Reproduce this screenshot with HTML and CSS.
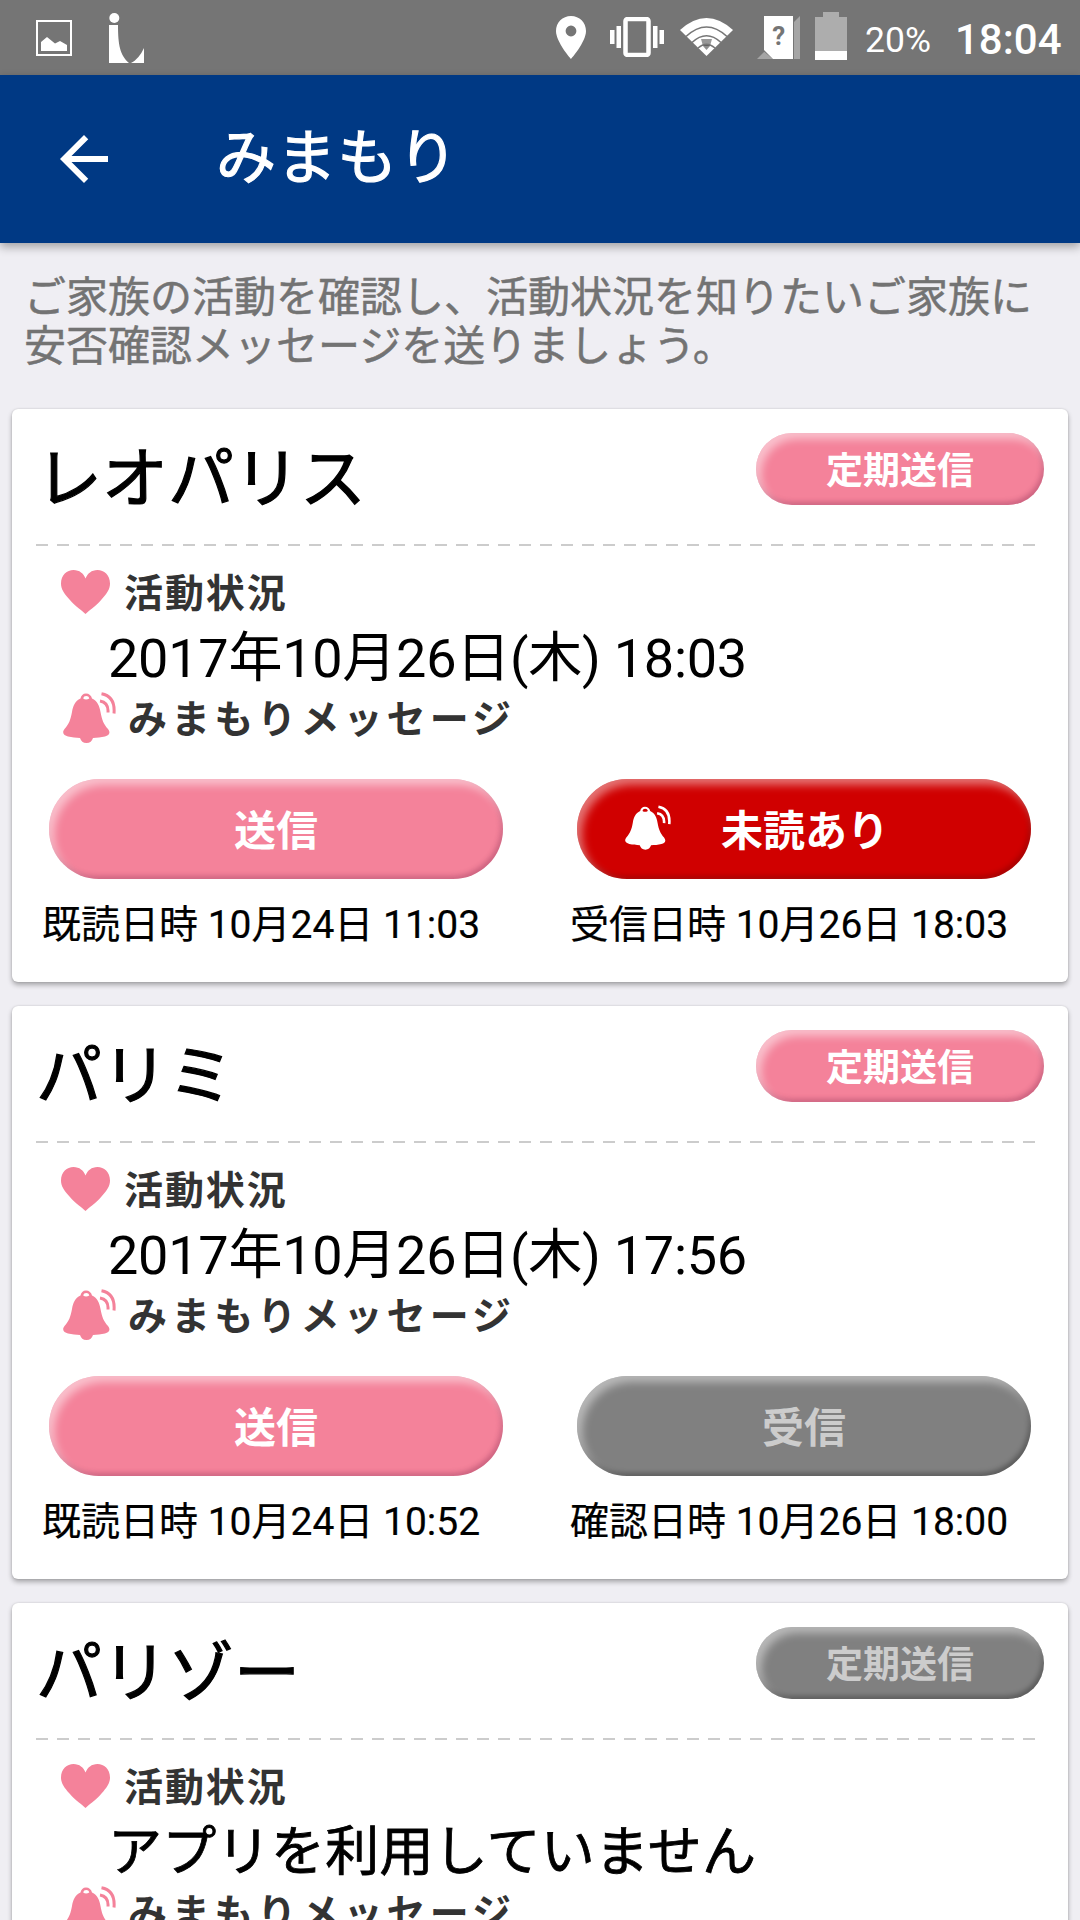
FILE: index.html
```html
<!DOCTYPE html>
<html lang="ja">
<head>
<meta charset="utf-8">
<title>みまもり</title>
<link rel="stylesheet" href="styles.css">
</head>
<body>
<svg class="defs" aria-hidden="true">
  <symbol id="heart" viewBox="0 0 49 44">
    <path d="M24.500 44C21 40.500 15 37 8.500 29.500C3 23.500 0 19 0 13.500C0 5 6 0 12.500 0C18.500 0 22.500 3.500 24.500 8.500C26.500 3.500 30.500 0 36.500 0C43 0 49 5 49 13.500C49 19 46 23.500 40.500 29.500C34 37 28 40.500 24.500 44Z" fill="currentColor"/>
  </symbol>
  <symbol id="bell" viewBox="0 0 53 51">
    <path fill="currentColor" fill-rule="evenodd" d="M23 1.500C20 1.500 18 3.500 17.500 6.500C12 9 10 14 9 20C7.500 28 6 32 1.500 37C-1.500 41 1 43.500 5 44.500C9 45.500 13 45.700 17 46C18 49 20 51 23.500 51C27 51 29 49 30 46C34 45.700 38 45.500 42 44.500C46 43.500 48 41 45 37C40.500 32 39 28 37.500 20C36.500 14 34.500 9 29 6.500C28.500 3.500 26 1.500 23 1.500ZM23.200 4C24.800 4 26 4.800 26.300 6.500C24 7.800 22 7.800 20.200 6.500C20.500 4.800 21.700 4 23.200 4Z"/>
    <path d="M37 9C43 10 45.500 14 45 20.500M38.500 1.700C48 3.500 52 10 51 21.500" fill="none" stroke="currentColor" stroke-width="3"/>
  </symbol>
</svg>

<header class="status-bar">
  <svg class="ic-picture" viewBox="0 0 36 36"><rect x="1" y="1" width="34" height="34" fill="none" stroke="#fff" stroke-width="2"/><path d="M5 31V22L11 17L19 23.500L24 21L31 25V31Z" fill="#fff"/></svg>
  <svg class="ic-logo" viewBox="0 0 35 50"><circle cx="5.300" cy="5" r="5" fill="#fff"/><path d="M0 12H9C9 32 11 42 20 50H0ZM35 35V50H22Q30 46 35 35Z" fill="#fff"/></svg>
  <div class="indicators">
    <svg class="ic-pin" viewBox="0 0 30 43"><path fill="#fff" fill-rule="evenodd" d="M15 0C6.500 0 0 6.500 0 15C0 26 15 43 15 43S30 26 30 15C30 6.500 23.500 0 15 0ZM15 9.600A5.400 5.400 0 1 1 15 20.400A5.400 5.400 0 1 1 15 9.600Z"/></svg>
    <svg class="ic-vibrate" viewBox="0 0 54 40"><rect x="15.500" y="2" width="23" height="36" rx="2" fill="none" stroke="#fff" stroke-width="4.500"/><path d="M0 13h4.500v14H0zM6.500 9H11v22H6.500zM43 9h4.500v22H43zM49.500 13H54v14h-4.500z" fill="#fff"/></svg>
    <svg class="ic-wifi" viewBox="0 0 53 38"><path d="M26.500 38L0 12Q26.500-12 53 12Z" fill="#fff"/><path d="M6 18.500Q26.500-.5 47 18.500M12 24.500Q26.500 11 41 24.500M18 30Q26.500 22.500 35 30" fill="none" stroke="#777" stroke-width="1.600"/><path d="M21 21h11l-2 7h-7z" fill="#777" opacity=".75"/><path d="M23 28q3.500-2 7 0l-3.500 4z" fill="#333" opacity=".55"/></svg>
    <svg class="ic-sim" viewBox="0 0 43 43"><path d="M43 0V43H0Z" fill="#a5a5a5"/><path d="M5 0H37V43H16L5 34Z" fill="#757575"/><path d="M7 0H36V43H16L7 34Z" fill="#fff"/><text x="21.800" y="29" text-anchor="middle" class="sim-mark">?</text></svg>
    <svg class="ic-battery" viewBox="0 0 32 48"><path d="M8 0h16v5h8v34H0V5h8z" fill="#adadad"/><path d="M0 39h32v9H0z" fill="#fff"/></svg>
    <span class="percent">20%</span>
    <span class="clock">18:04</span>
  </div>
</header>

<nav class="app-bar">
  <svg class="back" viewBox="0 0 24 24"><path d="M20 11H7.830l5.590-5.590L12 4l-8 8 8 8 1.410-1.410L7.830 13H20v-2z" fill="#fff"/></svg>
  <h1 class="title">みまもり</h1>
</nav>

<main class="content">
  <p class="intro">ご家族の活動を確認し、活動状況を知りたいご家族に<br>安否確認メッセージを送りましょう。</p>

  <section class="card">
    <div class="card-head"><h2 class="name">レオパリス</h2><button class="pill pill-small pink">定期送信</button></div>
    <svg class="divider"><line x1="0" y1="1" x2="1000" y2="1"/></svg>
    <div class="label"><svg class="heart"><use href="#heart"/></svg><span>活動状況</span></div>
    <p class="activity">2017年10月26日(木) 18:03</p>
    <div class="label message"><svg class="bell"><use href="#bell"/></svg><span>みまもりメッセージ</span></div>
    <div class="actions">
      <div class="action"><button class="pill pink">送信</button><p class="stamp">既読日時 10月24日 11:03</p></div>
      <div class="action"><button class="pill red"><svg class="pill-bell"><use href="#bell"/></svg>未読あり</button><p class="stamp">受信日時 10月26日 18:03</p></div>
    </div>
  </section>

  <section class="card">
    <div class="card-head"><h2 class="name">パリミ</h2><button class="pill pill-small pink">定期送信</button></div>
    <svg class="divider"><line x1="0" y1="1" x2="1000" y2="1"/></svg>
    <div class="label"><svg class="heart"><use href="#heart"/></svg><span>活動状況</span></div>
    <p class="activity">2017年10月26日(木) 17:56</p>
    <div class="label message"><svg class="bell"><use href="#bell"/></svg><span>みまもりメッセージ</span></div>
    <div class="actions">
      <div class="action"><button class="pill pink">送信</button><p class="stamp">既読日時 10月24日 10:52</p></div>
      <div class="action"><button class="pill gray">受信</button><p class="stamp">確認日時 10月26日 18:00</p></div>
    </div>
  </section>

  <section class="card">
    <div class="card-head"><h2 class="name">パリゾー</h2><button class="pill pill-small gray">定期送信</button></div>
    <svg class="divider"><line x1="0" y1="1" x2="1000" y2="1"/></svg>
    <div class="label"><svg class="heart"><use href="#heart"/></svg><span>活動状況</span></div>
    <p class="activity unused">アプリを利用していません</p>
    <div class="label message"><svg class="bell"><use href="#bell"/></svg><span>みまもりメッセージ</span></div>
  </section>
</main>
</body>
</html>
```

FILE: styles.css
```css
* { box-sizing: border-box; margin: 0; padding: 0; }
html, body { height: 1920px; overflow: hidden; }
body {
  width: 1080px;
  display: flex;
  flex-direction: column;
  background: #efeef3;
  color: #000;
  font-family: Roboto, "Noto Sans CJK JP", sans-serif;
  white-space: nowrap;
}
svg { display: block; flex: none; }
.defs { position: absolute; width: 0; height: 0; }

.status-bar {
  flex: none;
  height: 75px;
  padding: 0 18px 0 36px;
  display: flex;
  align-items: flex-start;
  background: #757575;
  color: #fff;
}
.ic-picture { width: 36px; height: 36px; margin-top: 20px; }
.ic-logo { width: 35px; height: 50px; margin: 13px 0 0 37px; }
.indicators { display: flex; align-items: flex-start; margin-left: auto; }
.ic-pin { width: 30px; height: 43px; margin-top: 16px; }
.ic-vibrate { width: 54px; height: 40px; margin: 17px 0 0 24px; }
.ic-wifi { width: 53px; height: 38px; margin: 18px 0 0 16px; }
.ic-sim { width: 43px; height: 43px; margin: 16px 0 0 24px; }
.ic-battery { width: 32px; height: 48px; margin: 12px 0 0 15px; }
.sim-mark { font: 700 26px Roboto, sans-serif; fill: #757575; }
.percent { width: 66px; margin-left: 18px; font-size: 35.500px; line-height: 80px; }
.clock { width: 107px; margin-left: 24px; font-size: 42px; font-weight: 500; line-height: 80px; }

.app-bar {
  position: relative;
  flex: none;
  height: 168px;
  padding: 0 48px;
  display: flex;
  align-items: center;
  gap: 96px;
  background: #003984;
  color: #fff;
  box-shadow: 0 4px 9px rgba(0, 0, 0, .32);
}
.back { width: 72px; height: 72px; }
.title { font-size: 60px; font-weight: 400; line-height: 60px; letter-spacing: .6px; -webkit-text-stroke: 1.200px #fff; }

.content { padding: 30px 12px 0; display: flex; flex-direction: column; gap: 24px; }
.intro {
  height: 112px;
  padding-left: 12px;
  font-size: 42px;
  line-height: 49px;
  color: #737373;
  -webkit-text-stroke: .5px #737373;
}

.card {
  flex: none;
  height: 573px;
  border-radius: 6px;
  background: #fff;
  box-shadow: 0 3px 5px rgba(0, 0, 0, .3), 0 0 2px rgba(0, 0, 0, .15);
}
.card-head {
  height: 135px;
  padding: 24px 24px 0;
  display: flex;
  justify-content: space-between;
  align-items: flex-start;
}
.name { font-size: 66px; font-weight: 400; line-height: 94px; -webkit-text-stroke: 1.200px #000; }
.divider { width: 1000px; height: 2px; margin-left: 24px; }
.divider line { stroke: #ccc; stroke-width: 2; stroke-dasharray: 12 9; }

.label {
  height: 44px;
  margin-top: 26px;
  padding-left: 49px;
  display: flex;
  align-items: center;
  gap: 14px;
  color: #333;
  font-size: 39px;
  font-weight: 700;
  line-height: 48px;
  letter-spacing: 1.900px;
}
.heart { width: 49px; height: 44px; color: #f4829a; margin-top: -4px; }
.activity { height: 82px; padding-left: 96px; font-size: 54px; line-height: 85px; letter-spacing: -.25px; }
.unused { letter-spacing: .3px; -webkit-text-stroke: .8px #000; }
.message { margin-top: 0; padding-left: 51px; gap: 12px; line-height: 44px; letter-spacing: 4.100px; }
.bell { width: 53px; height: 51px; margin-top: -5px; color: #f4829a; }

.actions { display: flex; gap: 74px; margin-top: 37px; padding-left: 37px; }
.action { width: 454px; }
.pill {
  width: 454px;
  height: 100px;
  padding-bottom: 3px;
  display: flex;
  align-items: center;
  justify-content: center;
  border: 0;
  border-radius: 50px;
  color: #fff;
  font: 700 42px Roboto, "Noto Sans CJK JP", sans-serif;
}
.pill-small { width: 288px; height: 72px; border-radius: 36px; font-size: 37px; }
.pink { background: #f4829a; box-shadow: inset 5px 6px 9px rgba(255, 255, 255, .5), inset -2px -3px 5px rgba(120, 30, 70, .32); }
.red { padding-right: 94px; background: #d00000; box-shadow: inset 5px 6px 9px rgba(255, 255, 255, .45), inset -2px -3px 5px rgba(80, 0, 0, .32); }
.gray { background: #808080; color: #ccc; box-shadow: inset 5px 6px 9px rgba(255, 255, 255, .45), inset -2px -3px 5px rgba(0, 0, 0, .3); }
.pill-bell { width: 46px; height: 45px; margin-right: 50px; }
.stamp { height: 90px; margin-left: -7px; font-size: 39px; line-height: 93px; -webkit-text-stroke: .2px #000; }
```
